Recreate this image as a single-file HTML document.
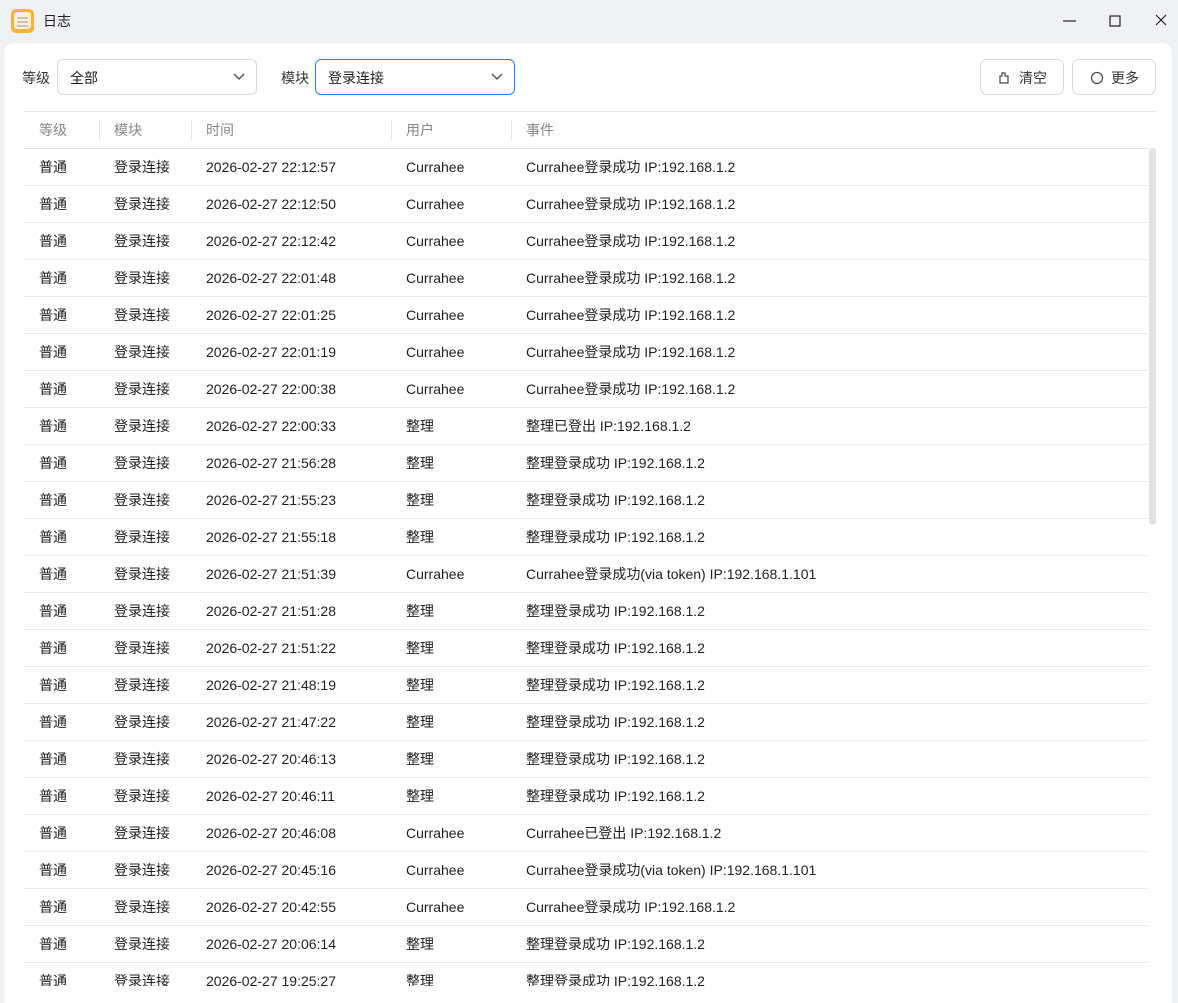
<!DOCTYPE html>
<html><head><meta charset="utf-8"><style>
*{margin:0;padding:0;box-sizing:border-box}
body{width:1178px;height:992px;overflow:hidden;background:#f0f1f4;font-family:"Liberation Sans","Noto Sans CJK SC",sans-serif;font-size:14px;color:#1f1f1f;position:relative}
.title{position:absolute;left:43px;top:11px;font-size:14px}
.icon{position:absolute;left:11px;top:9px;width:23px;height:24px;border-radius:5px;background:#f7b23b;}
.icon i{position:absolute;left:3px;top:3px;width:17px;height:17px;background:#fdf0d6;border-radius:3px}
.icon b{position:absolute;left:6px;height:1.5px;width:11px;background:#c9c3b5}
.panel{position:absolute;left:4px;top:43px;width:1168px;height:960px;background:#fff;border-radius:10px 10px 0 0}
.lbl{position:absolute;top:68px;font-size:14px;color:#333}
.sel{position:absolute;top:59px;height:36px;width:200px;border:1px solid #d9d9d9;border-radius:6px;padding:8px 12px;font-size:14px}
.sel.act{border-color:#2f7df6}
.sel svg{position:absolute;right:10px;top:12px}
.btn{position:absolute;top:59px;height:36px;border:1px solid #d9d9d9;border-radius:7px;font-size:14px;color:#333;padding:8px 0 0 0}
.clip{position:absolute;left:23px;top:111px;width:1133px;height:875px;overflow:hidden;border-top:1px solid #e5e5e5}
table{width:1125px;border-collapse:collapse}
th{height:36px;text-align:left;font-weight:normal;color:#888;font-size:14px;border-bottom:1px solid #e5e5e5;position:relative}
td{height:37px;border-bottom:1px solid #ececec;font-size:14px}
th span{position:absolute;left:0;top:8px;height:20px;width:1px;background:#e5e5e5}
.sb{position:absolute;left:1149px;top:148px;width:7px;height:377px;background:#e2e2e2;border-radius:4px}
</style></head><body>
<div class="icon"><i></i><b style="top:8px"></b><b style="top:12px"></b><b style="top:16px"></b></div>
<div class="title">日志</div>
<svg style="position:absolute;left:1062px;top:14px" width="14" height="14"><line x1="1" y1="7" x2="14" y2="7" stroke="#222" stroke-width="1.2"/></svg>
<svg style="position:absolute;left:1108px;top:14px" width="14" height="14"><rect x="2" y="2" width="10" height="10" fill="none" stroke="#222" stroke-width="1.2"/></svg>
<svg style="position:absolute;left:1155px;top:14px" width="14" height="14"><path d="M1 1L11 11M11 1L1 11" stroke="#222" stroke-width="1.2"/></svg>
<div class="panel"></div>
<div class="lbl" style="left:22px">等级</div>
<div class="sel" style="left:57px">全部<svg width="14" height="10"><path d="M2 2L7 7L12 2" fill="none" stroke="#555" stroke-width="1.5"/></svg></div>
<div class="lbl" style="left:281px">模块</div>
<div class="sel act" style="left:315px">登录连接<svg width="14" height="10"><path d="M2 2L7 7L12 2" fill="none" stroke="#555" stroke-width="1.5"/></svg></div>
<div class="btn" style="left:980px;width:84px"><svg style="position:absolute;left:17px;top:12px" width="12" height="12"><path d="M4 1h3v3h3v7H2V4h2z" fill="none" stroke="#444" stroke-width="1.2"/></svg><span style="position:absolute;left:38px">清空</span></div>
<div class="btn" style="left:1072px;width:84px"><svg style="position:absolute;left:17px;top:11px" width="14" height="14"><circle cx="7" cy="7" r="5.5" fill="none" stroke="#444" stroke-width="1.2"/></svg><span style="position:absolute;left:38px">更多</span></div>
<div class="clip">
<table>
<tr><th style="width:76px;padding-left:16px">等级</th><th style="width:92px;padding-left:15px"><span></span>模块</th><th style="width:200px;padding-left:15px"><span></span>时间</th><th style="width:120px;padding-left:15px"><span></span>用户</th><th style="padding-left:15px"><span></span>事件</th></tr>
<tbody id="b"></tbody>
</table>
</div>
<div class="sb"></div>
<script>
var d=[["22:12:57",0,0],["22:12:50",0,0],["22:12:42",0,0],["22:01:48",0,0],["22:01:25",0,0],["22:01:19",0,0],["22:00:38",0,0],["22:00:33",1,1],["21:56:28",1,0],["21:55:23",1,0],["21:55:18",1,0],["21:51:39",0,2],["21:51:28",1,0],["21:51:22",1,0],["21:48:19",1,0],["21:47:22",1,0],["20:46:13",1,0],["20:46:11",1,0],["20:46:08",0,1],["20:45:16",0,2],["20:42:55",0,0],["20:06:14",1,0],["19:25:27",1,0]];
var h="";d.forEach(function(r){var u=r[1]?"整理":"Currahee";var e=u+(r[2]==1?"已登出 IP:192.168.1.2":r[2]==2?"登录成功(via token) IP:192.168.1.101":"登录成功 IP:192.168.1.2");
h+='<tr><td style="padding-left:16px">普通</td><td style="padding-left:15px">登录连接</td><td style="padding-left:15px">2026-02-27 '+r[0]+'</td><td style="padding-left:15px">'+u+'</td><td style="padding-left:15px">'+e+'</td></tr>';});
document.getElementById("b").innerHTML=h;
</script>
</body></html>
